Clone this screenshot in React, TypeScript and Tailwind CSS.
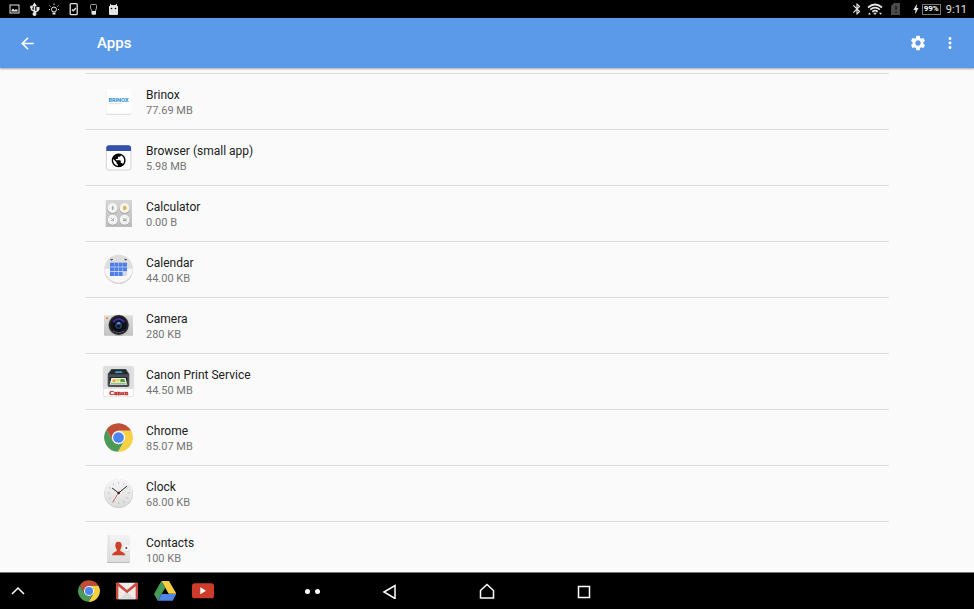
import type { ReactNode } from "react";
import {
  MdArrowBack,
  MdBluetooth,
  MdBolt,
  MdMoreVert,
  MdPublic,
  MdSettings,
} from "react-icons/md";

interface AppEntry {
  name: string;
  size: string;
  icon: ReactNode;
}

function BrinoxIcon() {
  return (
    <>
      <rect x="7" y="9" width="74" height="74" rx="4" fill="#d9d9d9" />
      <rect x="7" y="6" width="74" height="74" rx="4" fill="#fff" />
      <text x="44" y="46" textAnchor="middle" fontFamily="Inter, sans-serif" fontWeight="800" fontSize="16" fill="#3b94cf">
        BRINOX
      </text>
      <path d="M13 50h40" stroke="#c3d3de" strokeWidth="2" />
    </>
  );
}

function BrowserIcon() {
  return (
    <>
      <rect x="7" y="8" width="74" height="73" rx="7" fill="#fff" stroke="#d2d2d2" strokeWidth="3" />
      <path d="M7 24v-9q0-8 8-8h58q8 0 8 8v9z" fill="#3450a8" />
      <MdPublic x="19" y="27" size={50} color="#000" />
    </>
  );
}

function CalculatorIcon() {
  return (
    <>
      <rect x="5" y="3" width="79" height="81" fill="url(#calc-bg)" />
      {[
        [26, 27],
        [62, 27],
        [26, 62],
        [62, 62],
      ].map(([x, y]) => (
        <g key={`${x}-${y}`}>
          <circle cx={x} cy={y + 2} r="16" fill="#a9a9a9" />
          <circle cx={x} cy={y} r="15" fill="#f3f3f3" />
        </g>
      ))}
      <path d="M26 21v12M23 27h6" stroke="#999" strokeWidth="3" />
      <rect x="57" y="21" width="10" height="12" rx="4" fill="#e8b23c" />
      <path d="M22 58l8 8m0-8l-8 8" stroke="#999" strokeWidth="3" />
      <path d="M57 60h11M57 65h11" stroke="#999" strokeWidth="3" />
    </>
  );
}

function CalendarIcon() {
  const cells = Array.from({ length: 12 }, (_, i) => i);
  return (
    <>
      <circle cx="44" cy="44" r="43" fill="#d2d2d2" />
      <circle cx="44" cy="41" r="42" fill="#f8f8f8" />
      <path d="M2 41a42 42 0 0 1 84 0z" fill="#dedede" />
      <path d="M19 12q4 7 8 0M61 12q4 7 8 0" fill="#444" stroke="#444" strokeWidth="2" />
      {cells.map((i) => (
        <rect
          key={i}
          x={18 + (i % 4) * 13}
          y={23 + Math.floor(i / 4) * 14}
          width="12"
          height="12"
          fill={i === 11 ? "#d5d9e3" : "#4f80ea"}
        />
      ))}
    </>
  );
}

function CameraIcon() {
  return (
    <>
      <rect y="13" width="87" height="61" rx="2" fill="url(#camera-body)" />
      <circle cx="9" cy="22" r="3" fill="#ee7c22" />
      <circle cx="44" cy="43" r="32" fill="#b5b5b5" />
      <circle cx="44" cy="42" r="30" fill="#24262b" />
      <circle cx="44" cy="42" r="24" fill="#111319" />
      <path d="M25 31q19-20 38 0l-9 8H34z" fill="#41309a" />
      <circle cx="44" cy="43" r="13" fill="#273a60" stroke="#08090c" strokeWidth="4" />
      <circle cx="44" cy="37" r="5" fill="#628bd0" />
      <circle cx="44" cy="45" r="5" fill="#101c31" />
      <path d="M27 59q17 12 34 0" fill="none" stroke="#55575c" strokeWidth="3" />
    </>
  );
}

function CanonIcon() {
  return (
    <>
      <rect x="-2" y="-2" width="91" height="91" rx="6" fill="#dfdfdf" stroke="#cfcfcf" />
      <path d="M-1 66h89v16q0 6-6 6H5q-6 0-6-6z" fill="#fff" />
      <path d="M22 6h44l10 15v34q0 5-5 5H16q-5 0-5-5V21z" fill="#4a4d51" />
      <path d="M24 8h40l9 14H14z" fill="#26292c" />
      <path d="M35 13h18l3 5H32z" fill="#37a1d6" />
      <path d="M17 31h53v20H17z" fill="#17191b" />
      <path d="M22 33h43l5 20H17z" fill="#edf2e6" />
      <path d="M27 37h8l-1 8h-9z" fill="#eca33c" />
      <path d="M37 36h10v7H37z" fill="#dedb4c" />
      <path d="M49 36h12l3 9H49z" fill="#559b44" />
      <path d="M20 49h47" stroke="#82b95d" strokeWidth="3" />
      <text x="44" y="83" textAnchor="middle" fontFamily="Liberation Serif, serif" fontWeight="700" fontSize="20" fill="#b91d16" stroke="#b91d16">
        Canon
      </text>
    </>
  );
}

function ChromeIcon() {
  return (
    <>
      <path d="M81.6 23.5A43 43 0 0 0 7.2 20.5L26.2 53.5 43.5 43.5V23.5z" fill="#bf4e37" />
      <path d="M81.6 23.5A43 43 0 0 1 41.8 86.5L60.8 53.5 43.5 43.5V23.5z" fill="#f5d143" />
      <path d="M41.8 86.5A43 43 0 0 1 7.2 20.5L26.2 53.5 43.5 43.5 60.8 53.5z" fill="#4d9a58" />
      <circle cx="43.5" cy="43.5" r="20" fill="#f5f5f5" />
      <circle cx="43.5" cy="43.5" r="16" fill="#4c86f3" />
    </>
  );
}

function ClockIcon() {
  const ticks = Array.from({ length: 12 }, (_, i) => i * 30);
  return (
    <>
      <circle cx="44" cy="44" r="43" fill="#c9c9c9" />
      <circle cx="44" cy="42" r="42" fill="url(#clock-face)" />
      {ticks.map((angle) => (
        <path key={angle} d="M44 8v7" stroke="#b4b4b4" strokeWidth="2" transform={`rotate(${angle} 44 42)`} />
      ))}
      <path d="M46 37L26 70" stroke="#cf6e64" strokeWidth="3" />
      <path d="M24 27l20 15 25-21" fill="none" stroke="#2c2c2c" strokeWidth="3" />
      <circle cx="44" cy="42" r="4" fill="#2c2c2c" />
    </>
  );
}

function ContactsIcon() {
  return (
    <>
      <rect x="9" y="2" width="69" height="82" rx="3" fill="#bdbdbd" />
      <rect x="9" y="0" width="69" height="81" rx="3" fill="url(#contacts-bg)" />
      <path d="M15 0v81" stroke="#d5d5d5" strokeWidth="2" />
      <circle cx="68" cy="41" r="10" fill="#f7f7f7" />
      <path d="M62 48q6 5 14-1" fill="none" stroke="#c4c4c4" strokeWidth="2" />
      <circle cx="67" cy="39" r="3" fill="#444" />
      <path d="M43 20q11 0 10 13-1 7-4 10v5q14 5 15 13H24q1-8 14-13v-5q-4-4-4-10-1-13 9-13z" fill="#cb4229" />
    </>
  );
}

const apps: AppEntry[] = [
  { name: "Brinox", size: "77.69 MB", icon: <BrinoxIcon /> },
  { name: "Browser (small app)", size: "5.98 MB", icon: <BrowserIcon /> },
  { name: "Calculator", size: "0.00 B", icon: <CalculatorIcon /> },
  { name: "Calendar", size: "44.00 KB", icon: <CalendarIcon /> },
  { name: "Camera", size: "280 KB", icon: <CameraIcon /> },
  { name: "Canon Print Service", size: "44.50 MB", icon: <CanonIcon /> },
  { name: "Chrome", size: "85.07 MB", icon: <ChromeIcon /> },
  { name: "Clock", size: "68.00 KB", icon: <ClockIcon /> },
  { name: "Contacts", size: "100 KB", icon: <ContactsIcon /> },
];

function Gradients() {
  return (
    <svg className="absolute size-0" aria-hidden="true">
      <defs>
        <linearGradient id="calc-bg" x2="0" y2="1">
          <stop stopColor="#d6d6d6" />
          <stop offset="1" stopColor="#bcbcbc" />
        </linearGradient>
        <linearGradient id="camera-body" x2="0" y2="1">
          <stop stopColor="#dedede" />
          <stop offset="1" stopColor="#c2c2c2" />
        </linearGradient>
        <linearGradient id="clock-face" x2="0" y2="1">
          <stop stopColor="#f6f6f6" />
          <stop offset="1" stopColor="#dcdcdc" />
        </linearGradient>
        <linearGradient id="contacts-bg" x2="0" y2="1">
          <stop stopColor="#f3f3f3" />
          <stop offset="1" stopColor="#dddddd" />
        </linearGradient>
      </defs>
    </svg>
  );
}

function StatusBar() {
  return (
    <div className="flex h-[18px] shrink-0 items-center justify-between bg-black pr-[7px] pl-2 text-[#e4e4e4]">
      <div className="flex items-center gap-[6px]">
        <svg viewBox="0 0 14 14" className="size-[14px]" fill="none" stroke="currentColor">
          <rect x="2" y="3" width="9" height="8" />
          <path d="M3.5 9.5V8L5 6.5 6.5 8l1-.5h2v2z" fill="currentColor" stroke="none" />
        </svg>
        <svg viewBox="0 0 14 14" className="size-[14px]" fill="none" stroke="currentColor" strokeWidth="1.5">
          <path d="M6.5 11V2M6.5 9.500L3.500 7.500V5M6.500 10.500l3.500-2V6" />
          <path d="M4 4.200l2.500-3.700L9 4.200z" fill="currentColor" stroke="none" />
          <circle cx="6.500" cy="12" r="2" fill="currentColor" stroke="none" />
          <circle cx="3.500" cy="5" r="1.500" fill="currentColor" stroke="none" />
          <rect x="8.500" y="5" width="3" height="3" fill="currentColor" stroke="none" />
        </svg>
        <svg viewBox="0 0 14 14" className="size-[14px]" fill="none" stroke="currentColor">
          <circle cx="6" cy="7.500" r="2.500" />
          <path d="M6 1.500V3M1.500 3.500l1 1M10.500 3.500l-1 1M1 7.500h1M10 7.500h1" />
          <path d="M4.500 10.500h3v2h-3z" fill="currentColor" stroke="none" />
        </svg>
        <svg viewBox="0 0 14 14" className="size-[14px]" fill="none" stroke="currentColor" strokeWidth="1.300">
          <rect x="2.200" y="1.700" width="7" height="11" rx="1" />
          <path d="M4 7.500l1.300 1.300L8 6" />
        </svg>
        <svg viewBox="0 0 14 14" className="size-[14px]" fill="none" stroke="currentColor">
          <path d="M4 9L2.500 6V3.500q0-1 1-1h4q1 0 1 1V6L7.500 9" opacity=".7" />
          <path d="M3.500 9h4.500v3q0 .7-1 .7H4.500q-1 0-1-.7z" fill="currentColor" stroke="none" />
        </svg>
        <svg viewBox="0 0 14 14" className="size-[14px]" fill="currentColor">
          <path d="M2 1.500L3.500 3h4L9 1.500V4h1v8q0 1-1 1H2q-1 0-1-1V4h1z" />
          <circle cx="3.500" cy="6.500" r=".8" fill="#000" />
          <circle cx="7.500" cy="6.500" r=".8" fill="#000" />
        </svg>
      </div>
      <div className="flex items-center">
        <MdBluetooth size={14} />
        <svg viewBox="0 0 16 14" className="ml-[3px] h-[14px] w-4" fill="none" stroke="currentColor" strokeWidth="1.700">
          <path d="M1 5.500q7-6 14 0M3.200 7.700q4.800-4 9.600 0M5.300 9.700q2.700-2 5.400 0" />
          <path d="M8 13l-2-2.200h4z" fill="currentColor" stroke="none" />
          <path d="M1 12.500l1.500-2 1.500 2zM12 10.800h3l-1.500 2z" fill="currentColor" stroke="none" />
        </svg>
        <svg viewBox="0 0 10 12" className="ml-2 h-3 w-[10px]">
          <path d="M3 0h6v12H0V3z" fill="#4b4b4b" />
          <path d="M5 3v4M5 8.500v1.500" stroke="#161616" strokeWidth="1.300" />
        </svg>
        <MdBolt size={12} className="ml-[9px]" />
        <div className="flex h-[11px] items-center border border-[#777] px-px text-[8px] leading-none font-bold text-white">
          99%
        </div>
        <span className="ml-[5px] text-[11px] leading-none">9:11</span>
      </div>
    </div>
  );
}

function Toolbar() {
  return (
    <header className="z-10 flex h-[50px] shrink-0 items-center bg-[#5b9ae9] pr-[15px] pl-[18px] text-white shadow-[0_1px_2px_rgba(0,0,0,0.35)]">
      <button aria-label="Back">
        <MdArrowBack size={19} />
      </button>
      <h1 className="ml-[60px] pt-px text-[15px] font-medium">Apps</h1>
      <button aria-label="Settings" className="ml-auto">
        <MdSettings size={18} />
      </button>
      <button aria-label="More options" className="ml-[14px]">
        <MdMoreVert size={18} />
      </button>
    </header>
  );
}

function AppRow({ app }: { app: AppEntry }) {
  return (
    <li className="h-14 border-t border-[#dedede]">
      <button className="flex h-full w-full items-center gap-[13px] pl-[19px] text-left">
        <svg viewBox="0 0 87 87" className="size-[29px] shrink-0 overflow-visible" aria-hidden="true">
          {app.icon}
        </svg>
        <span className="min-w-0 flex-1 pt-0.5">
          <span className="block truncate text-[12px] leading-4 text-[#212121]">{app.name}</span>
          <span className="block truncate text-[11px] leading-[15px] text-[#757575]">{app.size}</span>
        </span>
      </button>
    </li>
  );
}

function NavBar() {
  return (
    <nav className="z-10 grid h-[37px] shrink-0 grid-cols-[1fr_auto_1fr] items-center border-t border-[#777] bg-black text-white">
      <div className="flex items-center gap-4 pl-[11px]">
        <button aria-label="Show recent small apps" className="mr-[37px]">
          <svg viewBox="0 0 14 14" className="size-[14px]" fill="none" stroke="currentColor" strokeWidth="1.500">
            <path d="M1 10l6-6 6 6" />
          </svg>
        </button>
        <button aria-label="Chrome">
          <svg viewBox="0 0 87 87" className="size-[22px]">
            <ChromeIcon />
          </svg>
        </button>
        <button aria-label="Gmail">
          <svg viewBox="0 0 66 66" className="size-[22px]">
            <rect y="8" width="66" height="50" rx="4" fill="#ececec" />
            <path d="M9 58l24-22 24 22z" fill="#dadada" />
            <path d="M0 12q0-4 4-4h3l26 22L59 8h3q4 0 4 4v42q0 4-4 4h-3V19L33 40 7 19v39H4q-4 0-4-4z" fill="#cb4a3b" />
          </svg>
        </button>
        <button aria-label="Drive">
          <svg viewBox="0 0 66 66" className="size-[22px]">
            <path d="M22 3h23l22 38H44z" fill="#f4ce42" />
            <path d="M22 3L0 42l11 20 23-39z" fill="#479b55" />
            <path d="M23 42h44L56 62H11z" fill="#4d85e9" />
          </svg>
        </button>
        <button aria-label="YouTube">
          <svg viewBox="0 0 66 66" className="size-[22px]">
            <rect y="10" width="66" height="45" rx="8" fill="#cd3b2b" />
            <path d="M25 22l17 10-17 11z" fill="#fff" />
          </svg>
        </button>
        <div className="mr-[22px] ml-auto flex gap-[5px]">
          <span className="size-[5px] rounded-full bg-white" />
          <span className="size-[5px] rounded-full bg-white" />
        </div>
      </div>
      <div className="flex">
        <button aria-label="Back" className="flex w-[97px] justify-center">
          <svg viewBox="0 0 16 16" className="size-4" fill="none" stroke="currentColor" strokeWidth="1.500">
            <path d="M2 9l11-6.500v13z" />
          </svg>
        </button>
        <button aria-label="Home" className="flex w-[97px] justify-center">
          <svg viewBox="0 0 16 16" className="size-4" fill="none" stroke="currentColor" strokeWidth="1.500">
            <path d="M1.500 15V7.500L8 1.500l6.500 6V15z" />
          </svg>
        </button>
        <button aria-label="Recents" className="flex w-[97px] justify-center">
          <svg viewBox="0 0 16 16" className="size-4" fill="none" stroke="currentColor" strokeWidth="1.500">
            <rect x="2.500" y="3.500" width="11" height="11" />
          </svg>
        </button>
      </div>
    </nav>
  );
}

export default function App() {
  return (
    <div className="flex h-screen flex-col bg-[#fafafa] font-[Roboto,sans-serif]">
      <Gradients />
      <StatusBar />
      <Toolbar />
      <main className="min-h-0 flex-1 overflow-hidden px-[85px] pt-[5px]">
        <ul>
          {apps.map((app) => (
            <AppRow key={app.name} app={app} />
          ))}
        </ul>
      </main>
      <NavBar />
    </div>
  );
}
